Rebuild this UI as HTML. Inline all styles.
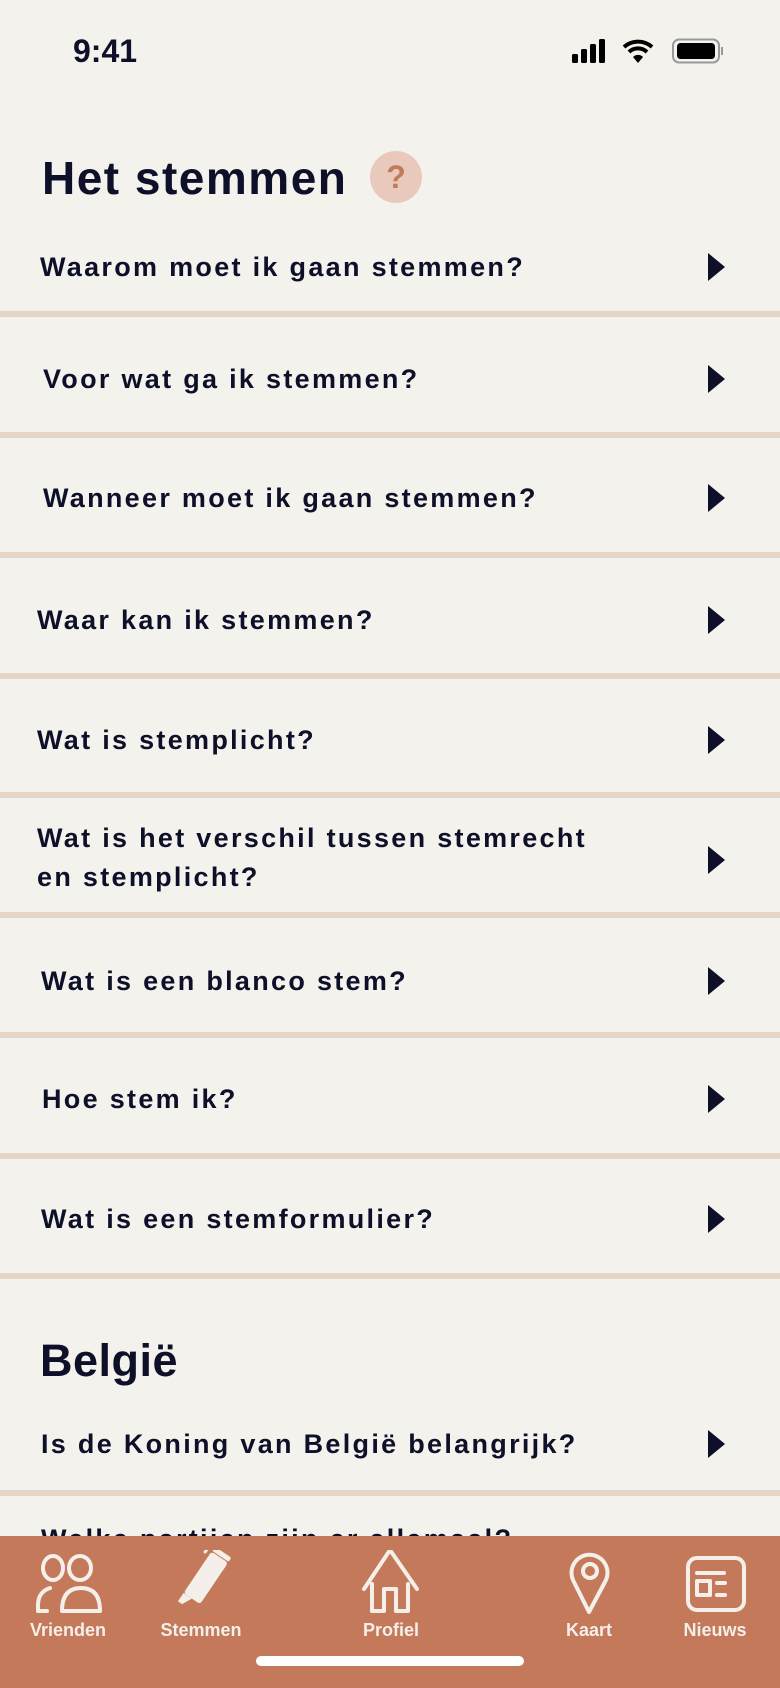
<!DOCTYPE html>
<html><head><meta charset="utf-8"><style>
*{margin:0;padding:0;box-sizing:border-box}
body{width:780px;height:1688px;background:#f4f2ed;font-family:"Liberation Sans",sans-serif;color:#0d1028;position:relative;overflow:hidden}
.a{position:absolute}
.t{position:absolute;font-size:27px;font-weight:bold;letter-spacing:2.3px;line-height:39px;white-space:nowrap}
.sep{position:absolute;left:0;width:780px;height:6px;background:#e3d6c5}
.arr{position:absolute;left:708px;width:0;height:0;border-top:14px solid transparent;border-bottom:14px solid transparent;border-left:17px solid #0d1028}
.lbl{position:absolute;top:1620px;font-size:18px;font-weight:bold;color:#f4efe9;transform:translateX(-50%);white-space:nowrap}
</style></head><body>
<div class="a" style="left:73px;top:33px;font-size:32px;font-weight:bold">9:41</div>
<svg class="a" style="left:572px;top:38px" width="160" height="28" viewBox="0 0 160 28">
<rect x="0" y="16" width="6" height="9" rx="1.5" fill="#000"/><rect x="9" y="11" width="6" height="14" rx="1.5" fill="#000"/><rect x="18" y="6" width="6" height="19" rx="1.5" fill="#000"/><rect x="27" y="1" width="6" height="24" rx="1.5" fill="#000"/>
<path d="M52 9a21 21 0 0 1 28 0" stroke="#000" stroke-width="4" fill="none"/><path d="M57 14a13 13 0 0 1 18 0" stroke="#000" stroke-width="4" fill="none"/><path d="M61 19l5 6 5-6a7 7 0 0 0-10 0z" fill="#000"/>
<rect x="101" y="1.5" width="46" height="23" rx="6" fill="none" stroke="#999" stroke-width="2"/><rect x="105" y="5" width="38" height="16" rx="3.5" fill="#000"/><rect x="149" y="9" width="2" height="8" fill="#999"/>
</svg>
<div class="a" style="left:42px;top:151px;font-size:46px;font-weight:bold;letter-spacing:1.5px">Het stemmen</div>
<div class="a" style="left:370px;top:151px;width:52px;height:52px;border-radius:50%;background:#e8c9bb;color:#c5795b;font-size:32px;font-weight:bold;text-align:center;line-height:52px">?</div>

<div class="t" style="left:40px;top:248px">Waarom moet ik gaan stemmen?</div><div class="arr" style="top:253px"></div>
<div class="sep" style="top:311px"></div>
<div class="t" style="left:43px;top:360px">Voor wat ga ik stemmen?</div><div class="arr" style="top:365px"></div>
<div class="sep" style="top:432px"></div>
<div class="t" style="left:43px;top:479px">Wanneer moet ik gaan stemmen?</div><div class="arr" style="top:484px"></div>
<div class="sep" style="top:552px"></div>
<div class="t" style="left:37px;top:601px">Waar kan ik stemmen?</div><div class="arr" style="top:606px"></div>
<div class="sep" style="top:673px"></div>
<div class="t" style="left:37px;top:721px">Wat is stemplicht?</div><div class="arr" style="top:726px"></div>
<div class="sep" style="top:792px"></div>
<div class="t" style="left:37px;top:819px">Wat is het verschil tussen stemrecht<br>en stemplicht?</div><div class="arr" style="top:846px"></div>
<div class="sep" style="top:912px"></div>
<div class="t" style="left:41px;top:962px">Wat is een blanco stem?</div><div class="arr" style="top:967px"></div>
<div class="sep" style="top:1032px"></div>
<div class="t" style="left:42px;top:1080px">Hoe stem ik?</div><div class="arr" style="top:1085px"></div>
<div class="sep" style="top:1153px"></div>
<div class="t" style="left:41px;top:1200px">Wat is een stemformulier?</div><div class="arr" style="top:1205px"></div>
<div class="sep" style="top:1273px"></div>
<div class="a" style="left:40px;top:1335px;font-size:45px;font-weight:bold;letter-spacing:0.5px">België</div>
<div class="t" style="left:41px;top:1425px">Is de Koning van België belangrijk?</div><div class="arr" style="top:1430px"></div>
<div class="sep" style="top:1490px"></div>
<div class="t" style="left:41px;top:1520px">Welke partijen zijn er allemaal?</div>

<div class="a" style="left:0;top:1536px;width:780px;height:152px;background:#c5795b"></div>
<svg class="a" style="left:0;top:1550px" width="780" height="70" viewBox="0 0 780 70" fill="none" stroke="#f4efe9" stroke-width="4" stroke-linecap="round" stroke-linejoin="round">
<ellipse cx="53" cy="18" rx="10" ry="12"/><ellipse cx="80" cy="18" rx="11" ry="12"/>
<path d="M38 61v-6q0-13 12-17M47 61h-9"/><path d="M62 61q0-23 19-23q19 0 19 23z"/>
<g transform="translate(203,32) rotate(34)"><rect x="-10" y="-30" width="20" height="50" rx="3" fill="#f4efe9" stroke="none"/><path d="M-10 20l0 10 5 0 5-10z" fill="#f4efe9" stroke="none"/><path d="M-15 -26v-10" stroke-width="3"/><rect x="-10" y="-36" width="20" height="5" rx="2" fill="#f4efe9" stroke="none"/></g>
<path d="M364 39l26-39 27 39"/><path d="M372 34v27h12v-22h12v22h12v-27"/>
<path d="M589 62l-16-32a18 18 0 1 1 33 0z"/><circle cx="590" cy="21" r="7"/>
<rect x="688" y="8" width="56" height="52" rx="9"/><path d="M697 23h27M697 45h13v-14h-13zM717 33h8M717 45h8M744 22v30"/>
</svg>
<div class="lbl" style="left:68px">Vrienden</div>
<div class="lbl" style="left:201px">Stemmen</div>
<div class="lbl" style="left:391px">Profiel</div>
<div class="lbl" style="left:589px">Kaart</div>
<div class="lbl" style="left:715px">Nieuws</div>
<div class="a" style="left:256px;top:1656px;width:268px;height:10px;border-radius:5px;background:#fff"></div>
</body></html>
